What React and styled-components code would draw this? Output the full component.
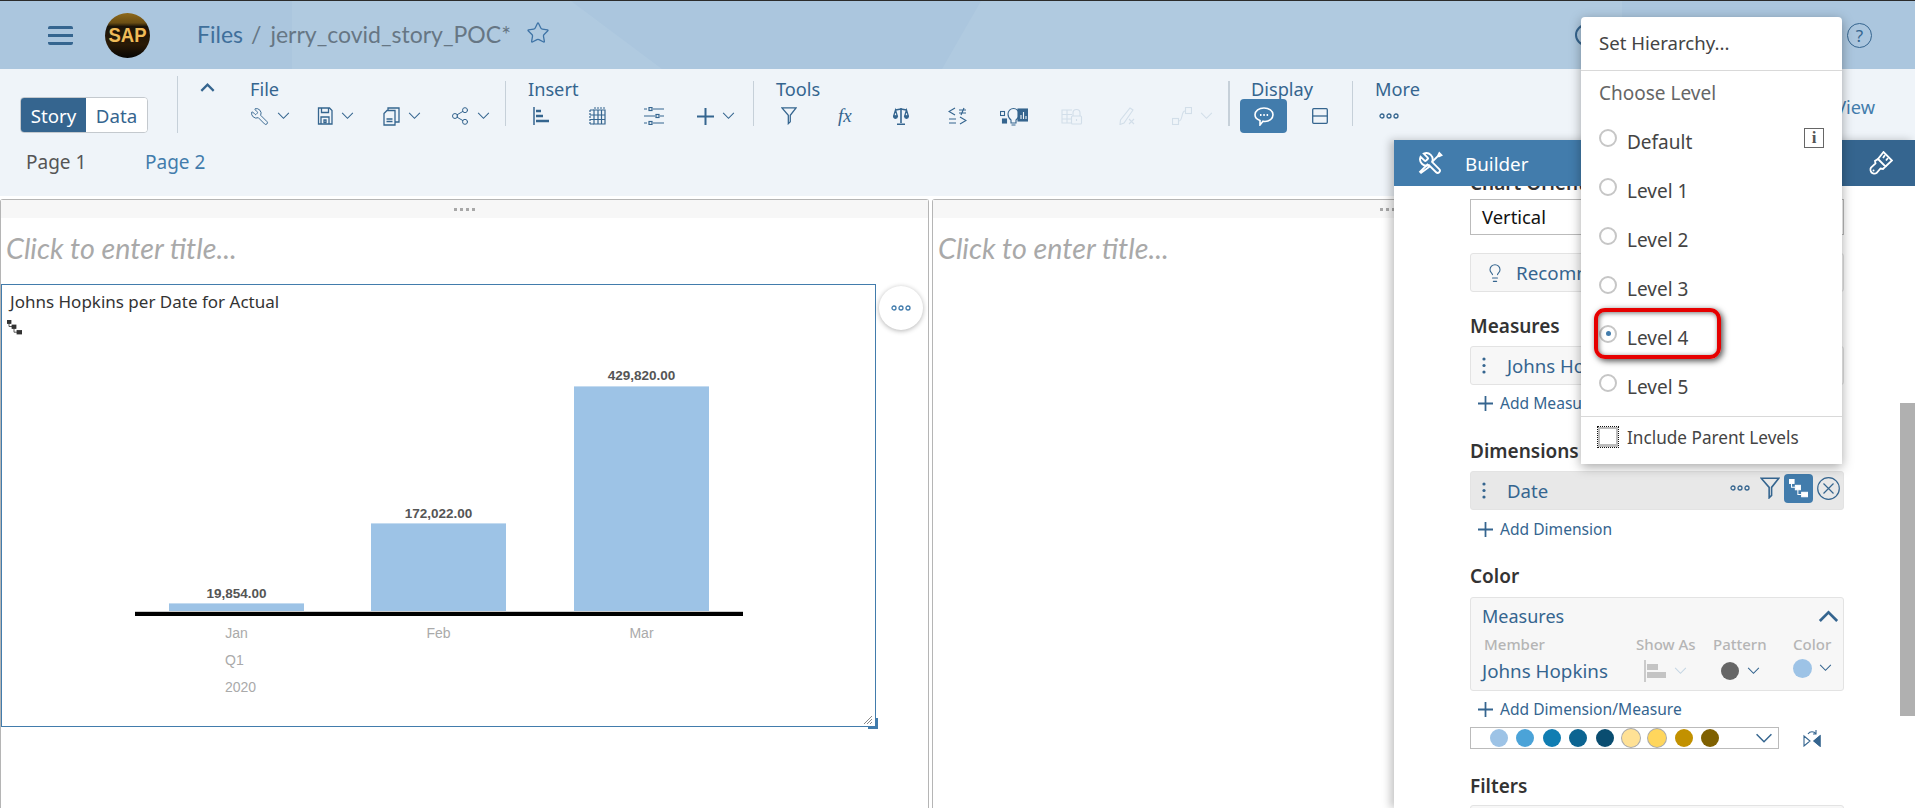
import React from 'react'
import styled, { createGlobalStyle } from 'styled-components'
import { Star, Wrench, Share2, Lightbulb } from 'lucide-react'

const GlobalStyle = createGlobalStyle`
  html, body {
    margin: 0;
    padding: 0;
    background: #fff;
  }
  body {
    font-family: "Noto Sans", "Open Sans", sans-serif;
    color: #333;
    overflow: hidden;
  }
  * {
    box-sizing: border-box;
  }
`

const Page = styled.div`
  position: relative;
  width: 1915px;
  height: 808px;
  overflow: hidden;
  background: #fff;
`

const ShellBar = styled.header`
  position: relative;
  z-index: 0;
  display: flex;
  align-items: center;
  height: 69px;
  padding-left: 48px;
  border-top: 1px solid #2b2b2b;
  background: #abc6de;
  color: #35658f;

  &::before {
    content: '';
    position: absolute;
    top: 0;
    bottom: 0;
    left: 292px;
    width: 370px;
    background: #b0cae0;
    clip-path: polygon(0 0, 279px 0, 100% 100%, 0 100%);
  }

  &::after {
    content: '';
    position: absolute;
    top: 0;
    bottom: 0;
    left: 942px;
    width: 680px;
    background: #b0cae0;
    clip-path: polygon(39px 0, 100% 0, 100% 100%, 0 100%);
  }

  > * {
    position: relative;
    z-index: 1;
  }
`

const Hamburger = styled.div`
  width: 25px;
  height: 19px;
  margin-right: 32px;
  border-top: 3px solid #35658f;
  border-bottom: 3px solid #35658f;
  border-radius: 2px;

  &::after {
    content: '';
    display: block;
    height: 3px;
    margin-top: 5px;
    background: #35658f;
  }
`

const Crumb = styled.span`
  margin-left: ${p => p.$gap || 0}px;
  margin-top: -2px;
  font-family: Lato, sans-serif;
  font-size: 23px;
  color: ${p => p.$muted ? '#667684' : '#3f6f9b'};
`

const StarSlot = styled.span`
  display: block;
  margin-left: 15px;
  color: #3f74a6;
`

const ShellRight = styled.div`
  display: flex;
  align-items: center;
  margin-left: auto;
  padding-right: 43px;
  gap: 250px;
`

const SearchGlyph = styled.span`
  display: block;
  width: 22px;
  height: 22px;
  border: 2px solid #35658f;
  border-radius: 50%;
`

const HelpGlyph = styled.span`
  display: flex;
  align-items: center;
  justify-content: center;
  width: 25px;
  height: 25px;
  border: 1.5px solid #35658f;
  border-radius: 50%;
  font-size: 17px;
  line-height: 1;
  color: #35658f;
`

const Toolbar = styled.section`
  height: 127px;
  background: #eff4f9;
  color: #35658f;
`

const ToolRow = styled.div`
  display: flex;
  align-items: flex-start;
  height: 64px;
  padding-left: 20px;
`

const Segmented = styled.div`
  display: flex;
  flex: none;
  width: 128px;
  height: 36px;
  margin-top: 28px;
  margin-right: 29px;
  border: 1px solid #c4c9ce;
  border-radius: 4px;
  background: #fff;
  overflow: hidden;
`

const Segment = styled.div`
  display: flex;
  align-items: center;
  justify-content: center;
  height: 100%;
  width: ${p => p.$active ? 65 : 61}px;
  font-size: 18.7px;
  background: ${p => p.$active ? '#35658f' : '#fff'};
  color: ${p => p.$active ? '#fff' : '#35658f'};
`

const Divider = styled.div`
  flex: none;
  width: ${p => p.$thick ? 2 : 1}px;
  height: ${p => p.$tall ? 57 : 45}px;
  margin-top: ${p => p.$tall ? 7 : 12}px;
  background: #c6d0d9;
`

const CollapseSlot = styled.div`
  flex: none;
  width: 72px;
  padding: 14px 0 0 22px;
`

const ToolGroup = styled.div`
  flex: none;
  width: ${p => p.$w}px;
  padding-left: ${p => p.$pad}px;
  margin-top: 9px;
`

const GroupLabel = styled.div`
  height: 22px;
  margin-bottom: 4px;
  margin-left: ${p => p.$shift || 0}px;
  font-size: 18.2px;
  line-height: 22px;
  white-space: nowrap;
  color: #35658f;
`

const IconRow = styled.div`
  display: flex;
  align-items: center;
  height: 24px;
`

const ToolItem = styled.div`
  display: flex;
  flex: none;
  align-items: center;
  justify-content: flex-start;
  width: ${p => p.$w}px;
  padding-left: ${p => p.$pad || 0}px;
  gap: ${p => p.$gap || 8}px;
  color: ${p => p.$disabled ? '#d2dee9' : '#35658f'};
`

const ActiveTool = styled.div`
  display: flex;
  flex: none;
  align-items: center;
  justify-content: center;
  width: 47px;
  height: 34px;
  margin-right: 25px;
  border-radius: 4px;
  background: #427cac;
  color: #fff;
`

const FxGlyph = styled.span`
  display: block;
  font-family: "Liberation Serif", serif;
  font-style: italic;
  font-size: 19px;
  line-height: 20px;
`

const ViewLink = styled.div`
  margin-left: auto;
  margin-top: 26px;
  padding-right: 40px;
  font-size: 18.2px;
  color: #427cac;
`

const Tabs = styled.nav`
  display: flex;
  gap: 59px;
  padding: 17px 0 0 26px;
`

const Tab = styled.div`
  width: 60px;
  font-size: 19px;
  line-height: 24px;
  white-space: nowrap;
  color: ${p => p.$active ? '#427cac' : '#555'};
`

const Canvas = styled.main`
  display: grid;
  grid-template-columns: 929px 916px;
  gap: 3px;
  height: 612px;
  padding-top: 3px;
`

const Panel = styled.article`
  border: 1px solid #b5b5b5;
  border-bottom: 0;
  border-radius: 3px 3px 0 0;
`

const PanelHandle = styled.div`
  display: flex;
  align-items: center;
  justify-content: center;
  gap: 3px;
  height: 18px;
  background: #f7f7f7;
`

const HandleDot = styled.span`
  width: 3px;
  height: 3px;
  background: #a8a8a8;
`

const PageTitle = styled.div`
  height: 66px;
  padding: 14px 0 0 5px;
  font-family: Lato, sans-serif;
  font-style: italic;
  font-size: 28.7px;
  line-height: 32px;
  color: #a9a9a9;
`

const ChartBox = styled.div`
  position: relative;
  width: 875px;
  height: 443px;
  border: 1px solid #427cac;
`

const ChartTitle = styled.div`
  height: 20px;
  margin-top: 7px;
  padding-left: 8px;
  font-size: 17px;
  line-height: 20px;
  color: #333;
`

const ChartHint = styled.div`
  height: 22px;
  padding: 8px 0 0 5px;
  color: #333;
`

const ChartCanvas = styled.svg`
  display: block;
`

const MoreBubble = styled.div`
  position: absolute;
  top: 1px;
  left: 877px;
  display: flex;
  align-items: center;
  justify-content: center;
  width: 44px;
  height: 44px;
  border-radius: 50%;
  background: #fff;
  box-shadow: 0 1px 5px rgba(0, 0, 0, 0.3);
  color: #427cac;
`

const ResizeCorner = styled.div`
  position: absolute;
  right: -3px;
  bottom: -3px;
  width: 10px;
  height: 11px;
  border-right: 2px solid #427cac;
  border-bottom: 3px solid #427cac;
`

const ResizeGrip = styled.svg`
  position: absolute;
  right: 3px;
  bottom: 2px;
  stroke: #888;
  stroke-width: 1;
`

const Builder = styled.aside`
  position: absolute;
  top: 140px;
  right: 0;
  width: 521px;
  height: 668px;
  background: #fff;
  box-shadow: -4px 0 8px rgba(0, 0, 0, 0.22);
`

const BuilderHead = styled.div`
  display: flex;
  align-items: center;
  height: 46px;
  padding-left: 24px;
  background: #427cac;
  color: #fff;
`

const BuilderTitle = styled.span`
  margin-left: 22px;
  padding-top: 2px;
  font-size: 18.8px;
`

const BuilderTab = styled.div`
  display: flex;
  align-items: center;
  justify-content: flex-end;
  align-self: stretch;
  width: 75px;
  margin-left: auto;
  padding-right: 22px;
  background: #35658f;
`

const BuilderBody = styled.div`
  height: 622px;
  padding-left: 76px;
  overflow: hidden;
`

const BuilderColumn = styled.div`
  width: 374px;
`

const SectionLabel = styled.div`
  height: 22px;
  margin-top: ${p => p.$top}px;
  margin-bottom: ${p => p.$bottom || 9}px;
  font-size: 19px;
  font-weight: 600;
  line-height: 22px;
  color: #333;
`

const SelectBox = styled.div`
  display: flex;
  align-items: center;
  height: 36px;
  padding: 0 0 2px 11px;
  border: 1px solid #bbb;
  font-size: 18.4px;
  color: #111;
`

const ActionBox = styled.div`
  display: flex;
  align-items: center;
  gap: 11px;
  height: 39px;
  margin-top: 18px;
  padding-left: 14px;
  border: 1px solid #e3e3e3;
  border-radius: 3px;
  background: #f7f7f7;
  font-size: 18.8px;
  color: #35658f;
`

const FieldBox = styled.div`
  position: relative;
  display: flex;
  align-items: center;
  height: 39px;
  padding-left: 11px;
  border: 1px solid #e3e3e3;
  border-radius: 3px;
  background: ${p => p.$hover ? '#e8e8e8' : '#f7f7f7'};
  font-size: 18.6px;
  color: #35658f;
`

const DragDots = styled.svg`
  flex: none;
  margin-right: 21px;
  fill: #35658f;
`

const FieldActions = styled.div`
  display: flex;
  align-items: center;
  margin-left: auto;
  padding: 0 3px 5px 0;
  color: #35658f;
`

const ActionDots = styled.div`
  margin-right: 7px;
  color: #35658f;
`

const HierarchyToggle = styled.div`
  display: flex;
  align-items: center;
  justify-content: center;
  width: 29px;
  height: 29px;
  margin: 0 4px;
  border-radius: 4px;
  background: #427cac;
  color: #fff;
`

const AddLink = styled.div`
  display: flex;
  align-items: center;
  gap: 7px;
  height: 22px;
  margin-top: ${p => p.$top || 7}px;
  padding-left: 8px;
  font-size: 15.6px;
  color: #35658f;
`

const ColorBox = styled.div`
  position: relative;
  height: 94px;
  padding: 7px 11px 0;
  border: 1px solid #e3e3e3;
  border-radius: 3px;
  background: #f7f7f7;
`

const ColorHead = styled.div`
  display: flex;
  align-items: center;
  justify-content: space-between;
  height: 22px;
  margin-right: -7px;
  font-size: 18px;
  color: #35658f;
`

const MemberGrid = styled.div`
  display: grid;
  grid-template-columns: 152px 79px 80px 1fr;
  grid-template-rows: 25px 30px;
  align-items: center;
  margin-top: 4px;
`

const MemberHeading = styled.div`
  font-size: 15px;
  font-weight: 500;
  padding-left: ${p => p.$pad || 0}px;
  white-space: nowrap;
  color: #b5b5b5;
`

const MemberName = styled.div`
  font-size: 18.8px;
  white-space: nowrap;
  color: #35658f;
`

const MemberCell = styled.div`
  display: flex;
  align-items: center;
  gap: ${p => p.$gap || 8}px;
  padding-left: ${p => p.$pad || 0}px;
  margin-top: ${p => p.$lift ? -6 : 0}px;
  color: ${p => p.$faded ? '#c5d6e4' : '#35658f'};
`

const Swatch = styled.span`
  display: block;
  flex: none;
  width: ${p => p.$size || 18}px;
  height: ${p => p.$size || 18}px;
  border-radius: 50%;
  background: ${p => p.$color};
  box-shadow: ${p => p.$ring ? '0 0 0 1px #aaa' : 'none'};
`

const PaletteRow = styled.div`
  display: flex;
  align-items: center;
  margin-top: 7px;
  color: #35658f;
`

const Palette = styled.div`
  display: flex;
  align-items: center;
  gap: 8.4px;
  width: 309px;
  height: 22px;
  padding-left: 19px;
  border: 1px solid #bbb;
  margin-right: 24px;
`

const PaletteArrow = styled.span`
  display: block;
  margin-left: auto;
  padding-right: 5px;
  color: #35658f;
`

const NextBox = styled.div`
  height: 40px;
  border: 1px solid #e3e3e3;
  border-radius: 3px;
  background: #f7f7f7;
`

const ScrollThumb = styled.div`
  position: absolute;
  top: 263px;
  right: 0;
  width: 15px;
  height: 313px;
  background: #b0b0b0;
`

const Menu = styled.div`
  position: absolute;
  top: 17px;
  left: 1581px;
  z-index: 2;
  width: 261px;
  height: 447px;
  border-radius: 4px 4px 0 0;
  background: #fff;
  box-shadow: 0 3px 12px rgba(0, 0, 0, 0.35);
  color: #444;
  font-size: 18.6px;
`

const MenuAction = styled.div`
  height: 54px;
  padding: 14px 0 0 18px;
  border-bottom: 1px solid #d9d9d9;
  line-height: 24px;
`

const MenuHeading = styled.div`
  height: 44px;
  padding: 10px 0 0 18px;
  font-size: 19px;
  line-height: 24px;
  color: #666;
`

const LevelRow = styled.div`
  position: relative;
  display: flex;
  align-items: center;
  height: 49px;
  padding-left: 18px;
  font-size: 19px;
`

const Radio = styled.span`
  display: flex;
  flex: none;
  align-items: center;
  justify-content: center;
  width: 18px;
  height: 18px;
  margin-top: -4px;
  margin-right: 10px;
  border: 2px solid #c6c6c6;
  border-radius: 50%;

  &::after {
    content: '';
    display: ${p => p.$on ? 'block' : 'none'};
    width: 5px;
    height: 5px;
    border-radius: 50%;
    background: #427cac;
  }
`

const LevelText = styled.span`
  margin-top: 4px;
`

const InfoMark = styled.span`
  display: flex;
  align-items: center;
  justify-content: center;
  width: 20px;
  height: 20px;
  margin-left: auto;
  margin-right: 18px;
  margin-top: -4px;
  border: 1px solid #666;
  font-family: "Liberation Serif", serif;
  font-weight: 700;
  font-size: 17px;
  color: #555;
`

const RedCallout = styled.div`
  position: absolute;
  top: -3px;
  left: 13px;
  width: 127px;
  height: 51px;
  border: 4px solid #e60000;
  border-radius: 11px;
  box-shadow: 2px 2px 6px rgba(0, 0, 0, 0.7), inset 1px 1px 5px rgba(0, 0, 0, 0.55);
`

const MenuFooter = styled.div`
  display: flex;
  align-items: center;
  height: 48px;
  margin-top: 7px;
  padding: 0 0 7px 17px;
  border-top: 1px solid #d9d9d9;
  font-size: 17.2px;
`

const CheckMark = styled.span`
  display: block;
  flex: none;
  width: 20px;
  height: 20px;
  margin-right: 9px;
  border: 3px solid #bbb;
  border-right-width: 2px;
  border-left-width: 2px;
  border-top-width: 2px;
  outline: 1px dotted #111;
`

const Glyph = styled.svg`
  display: block;
  flex: none;
  fill: none;
  stroke: currentColor;
  stroke-width: ${p => p.$weight || 1.3};
`

const Chevron = ({ up, size = 13, weight = 1.1 }) => (
  <Glyph width={size} height={size * 0.6} viewBox="0 0 13 8" $weight={weight}>
    <polyline points={up ? '1,7 6.5,1.5 12,7' : '1,1 6.5,6.5 12,1'} />
  </Glyph>
)

const Dots = ({ width = 20 }) => (
  <Glyph width={width} height="6" viewBox="0 0 20 6" $weight={1.3}>
    <circle cx="3" cy="3" r="2" />
    <circle cx="10" cy="3" r="2" />
    <circle cx="17" cy="3" r="2" />
  </Glyph>
)

const SaveIcon = () => (
  <Glyph width="16" height="18" viewBox="0 0 16 18">
    <path d="M1.5 1h11l2.500 2.500V17h-13.500z" />
    <path d="M4.500 1v4.500h7V1M4 17v-7h8v7M7 13h2v2.500H7z" />
  </Glyph>
)

const CopyIcon = () => (
  <Glyph width="17" height="19" viewBox="0 0 17 19">
    <path d="M1 6.500L4 3.500h8V18H1z" />
    <path d="M5 3V1h11v14h-4M3.500 12h6M3.500 14.500h6" />
  </Glyph>
)

const BarsIcon = () => (
  <Glyph width="16" height="18" viewBox="0 0 16 18" $weight={1.5}>
    <path d="M1 0v18" />
    <path d="M3 4h5M3 9h7M3 14h13" strokeWidth="2.400" />
  </Glyph>
)

const TableIcon = () => (
  <Glyph width="17" height="18" viewBox="0 0 17 18" $weight={1.2}>
    <path d="M5 3h11v14H5z" />
    <path d="M1 3h4M1 8h15M1 12.500h15M1 17h4M9 3v14M12.500 3v14" />
    <path d="M1 3v14M5 1h11" strokeDasharray="2 1" />
  </Glyph>
)

const SlidersIcon = () => (
  <Glyph width="20" height="18" viewBox="0 0 20 18" $weight={1.2}>
    <path d="M0 2h3M9 2h11M0 9h11M16 9h4M0 16h3M9 16h11" />
    <rect x="5" y="0.500" width="3" height="3" />
    <rect x="12" y="7.500" width="3" height="3" />
    <rect x="5" y="14.500" width="3" height="3" />
  </Glyph>
)

const PlusIcon = ({ size = 17, weight = 2 }) => (
  <Glyph width={size} height={size} viewBox="0 0 17 17" $weight={weight}>
    <path d="M8.500 0v17M0 8.500h17" />
  </Glyph>
)

const FilterIcon = ({ size = 16 }) => (
  <Glyph width={size} height={size * 1.1} viewBox="0 0 16 18">
    <path d="M0.800 1h14.400L9.300 8.500V15L7.300 17V8.500z" />
  </Glyph>
)

const ScaleIcon = () => (
  <Glyph width="16" height="18" viewBox="0 0 16 18">
    <path d="M8 1v15M4 17.300h8M2.500 3L8 2l5.500 1" strokeWidth="1.600" />
    <path d="M2.500 3L0.700 9h3.600zM13.500 3l-1.800 6h3.600z" />
    <path d="M0.700 9.500a1.800 1.800 0 0 0 3.600 0zM11.700 9.500a1.800 1.800 0 0 0 3.600 0z" fill="currentColor" />
  </Glyph>
)

const CompareIcon = () => (
  <Glyph width="19" height="18" viewBox="0 0 19 18" $weight={1.200}>
    <path d="M7 1L1 4.500L7 8M11 3h7M11 6h7M13 8l3-7M1 12h7M1 16h7M12 10l6 3.500L12 17" />
  </Glyph>
)

const InsightIcon = () => (
  <Glyph width="28" height="20" viewBox="0 0 28 20" $weight={1.100}>
    <rect x="0.500" y="5.500" width="4" height="4" />
    <rect x="2.500" y="13" width="4" height="4" fill="currentColor" />
    <path d="M11 17v-3c-2-1.500-3-3.500-3-6a5.500 5.500 0 0 1 11 0c0 2.500-1 4.500-3 6v3zM11.500 19h4" />
    <rect x="18" y="3" width="10" height="12" fill="currentColor" />
    <path d="M21 13V9M23.500 13V6M26 13v-3" stroke="#eff4f9" />
  </Glyph>
)

const TableLockIcon = () => (
  <Glyph width="22" height="17" viewBox="0 0 22 17" $weight={1.100}>
    <path d="M11 2H1v13h9M1 6.500h10M1 11h9M6 2v13" />
    <path d="M12 8V5a3.500 3.500 0 0 1 7 0v3" />
    <rect x="10.500" y="8" width="10" height="8" rx="1" />
    <path d="M15.500 11v2" />
  </Glyph>
)

const PencilOffIcon = () => (
  <Glyph width="17" height="18" viewBox="0 0 17 18" $weight={1.100}>
    <path d="M11 1l3 2L5 16l-4 1.500L1.500 13zM10 17l5-5M15 17l-5-5" />
  </Glyph>
)

const ConnectIcon = () => (
  <Glyph width="20" height="18" viewBox="0 0 20 18" $weight={1.100}>
    <rect x="0.500" y="11.500" width="6" height="6" />
    <rect x="13.500" y="0.500" width="6" height="6" />
    <path d="M7 14c4 0 2-10 6-10" />
  </Glyph>
)

const BubbleIcon = () => (
  <Glyph width="20" height="19" viewBox="0 0 20 19" $weight={1.600}>
    <path d="M10 1c5 0 9 2.800 9 6.800s-4 6.700-8 6.700c-.800 0-1.500 0-2-.2L6 18v-4.500C3 12.500 1 10.500 1 7.800 1 3.800 5 1 10 1z" />
    <path d="M6 8h1.500M9.300 8h1.500M12.600 8h1.500" strokeWidth="2" />
  </Glyph>
)

const SplitIcon = () => (
  <Glyph width="16" height="16" viewBox="0 0 16 16">
    <rect x="0.700" y="0.700" width="14.600" height="14.600" rx="1" />
    <path d="M0.700 8h14.600" />
  </Glyph>
)

const HierarchyIcon = ({ size = 15 }) => (
  <Glyph width={size} height={size} viewBox="0 0 15 15" $weight={0.800}>
    <rect x="0" y="0" width="4" height="3.500" fill="currentColor" />
    <rect x="5" y="5" width="4" height="3.500" fill="currentColor" />
    <rect x="10" y="10.500" width="5" height="3.500" fill="currentColor" />
    <path d="M2 3v3.500h3M7 8.500v3.700h3" />
  </Glyph>
)

const CircleCross = () => (
  <Glyph width="23" height="23" viewBox="0 0 23 23" $weight={1.200}>
    <circle cx="11.500" cy="11.500" r="10.800" />
    <path d="M6.500 6.500l10 10M16.500 6.500l-10 10" />
  </Glyph>
)

const BuilderIcon = () => (
  <Glyph width="25" height="25" viewBox="0 0 24 24" $weight={1.800}>
    <g transform="translate(24 0) scale(-1 1)">
      <path d="M14.700 6.300a1 1 0 0 0 0 1.400l1.600 1.600a1 1 0 0 0 1.400 0l3.770-3.770a6 6 0 0 1-7.940 7.940l-6.910 6.910a2.120 2.120 0 0 1-3-3l6.910-6.910a6 6 0 0 1 7.940-7.940l-3.760 3.760z" />
    </g>
    <path d="M14 10l5-5 1.500-3 2 2-3 1.500M3 21l-1-1 7-7 2 2z" />
  </Glyph>
)

const PainterIcon = () => (
  <Glyph width="24" height="24" viewBox="0 0 24 24" $weight={1.800}>
    <path d="M9 8l7.500 7.500-2.500 2.500-2.500-.5-4 4.500c-1.500 1-4 .5-5-.5s-1.500-3.500-.5-5l4.500-4-.5-2.500z" />
    <path d="M9 8l5.500-7L23 9.500 16.500 15.500" />
    <path d="M16 4l-2 3M19 7l-2 2.500" />
    <circle cx="4.500" cy="19.500" r="1" fill="currentColor" stroke="none" />
  </Glyph>
)

const ShowAsIcon = () => (
  <Glyph width="22" height="22" viewBox="0 0 22 22" $weight={1.500}>
    <path d="M1 0v22" stroke="#bdbdbd" />
    <rect x="3" y="4" width="11" height="6" fill="#c4c4c4" stroke="none" />
    <rect x="3" y="12" width="19" height="6" fill="#c4c4c4" stroke="none" />
  </Glyph>
)

const SwapIcon = () => (
  <Glyph width="18" height="17" viewBox="0 0 18 17" $weight={1.100}>
    <path d="M1 6v10l6-5zM17 6v10l-6-5z" />
    <path d="M17 6v10l-6-5z" fill="currentColor" />
    <path d="M5 4c2-3 6-3 8 0M13 0v4h-3" />
  </Glyph>
)

const chartBars = [
  { x: 167, y: 269, h: 9, label: '19,854.00', labelY: 264, name: 'Jan' },
  { x: 369, y: 189, h: 89, label: '172,022.00', labelY: 184, name: 'Feb' },
  { x: 572, y: 52, h: 226, label: '429,820.00', labelY: 46, name: 'Mar' }
]

const ChartLabel = styled.text`
  font-family: "Liberation Sans", sans-serif;
  font-size: ${p => p.$strong ? 13.500 : 14}px;
  font-weight: ${p => p.$strong ? 700 : 400};
  fill: ${p => p.$strong ? '#555' : '#aaa'};
`

const BarChart = () => (
  <ChartCanvas width="870" height="390" viewBox="0 0 870 390">
    {chartBars.map(bar => (
      <g key={bar.name}>
        <rect x={bar.x} y={bar.y} width="135" height={bar.h} fill="#9dc3e6" />
        <rect x={bar.x} y={bar.y} width="135" height="1" fill="#c4dbf0" />
        <ChartLabel $strong x={bar.x + 67.500} y={bar.labelY} textAnchor="middle">{bar.label}</ChartLabel>
        <ChartLabel x={bar.x + 67.500} y="304" textAnchor="middle">{bar.name}</ChartLabel>
      </g>
    ))}
    <rect x="133" y="277" width="608" height="1" fill="#ccc" />
    <rect x="133" y="278" width="608" height="4" fill="#000" />
    <ChartLabel x="223" y="331">Q1</ChartLabel>
    <ChartLabel x="223" y="358">2020</ChartLabel>
  </ChartCanvas>
)

const palette = [
  { color: '#9dc3e6' },
  { color: '#4ba3d8' },
  { color: '#107db2' },
  { color: '#0c6491' },
  { color: '#0a4d70' },
  { color: '#ffe195', ring: true },
  { color: '#ffd65c', ring: true },
  { color: '#c29100' },
  { color: '#7f6000' }
]

const levels = ['Level 1', 'Level 2', 'Level 3', 'Level 4', 'Level 5']

const Handle = () => (
  <PanelHandle>
    <HandleDot />
    <HandleDot />
    <HandleDot />
    <HandleDot />
  </PanelHandle>
)

const Drag = () => (
  <DragDots width="4" height="17" viewBox="0 0 4 17">
    <circle cx="2" cy="2" r="1.600" />
    <circle cx="2" cy="8.500" r="1.600" />
    <circle cx="2" cy="15" r="1.600" />
  </DragDots>
)

const LogoMark = () => (
  <svg width="45" height="45" viewBox="0 0 45 45" style={{ marginRight: 47 }}>
    <defs>
      <linearGradient id="logoGlow" x1="0" y1="0" x2="0" y2="1">
        <stop offset="0" stopColor="#8f6a1c" />
        <stop offset="0.22" stopColor="#6a4e14" />
        <stop offset="0.3" stopColor="#1b1408" />
        <stop offset="0.7" stopColor="#2a1a06" />
        <stop offset="1" stopColor="#060504" />
      </linearGradient>
    </defs>
    <circle cx="22.500" cy="22.500" r="22.500" fill="url(#logoGlow)" />
    <text x="22.500" y="29" textAnchor="middle" textLength="38" lengthAdjust="spacingAndGlyphs" fontFamily="Liberation Sans, sans-serif" fontWeight="700" fontSize="20" fill="#f0bb58">SAP</text>
  </svg>
)

const App = () => (
  <Page>
    <GlobalStyle />
    <ShellBar>
      <Hamburger />
      <LogoMark />
      <Crumb>Files</Crumb>
      <Crumb $muted $gap={8}>/</Crumb>
      <Crumb $muted $gap={9}>jerry_covid_story_POC*</Crumb>
      <StarSlot><Star size={24} strokeWidth={1.300} /></StarSlot>
      <ShellRight>
        <SearchGlyph />
        <HelpGlyph>?</HelpGlyph>
      </ShellRight>
    </ShellBar>

    <Toolbar>
      <ToolRow>
        <Segmented>
          <Segment $active>Story</Segment>
          <Segment>Data</Segment>
        </Segmented>
        <Divider $tall />
        <CollapseSlot><Chevron up size={15} weight={2} /></CollapseSlot>
        <ToolGroup $w={255}>
          <GroupLabel>File</GroupLabel>
          <IconRow>
            <ToolItem $w={67}><Wrench size={19} strokeWidth={1.200} style={{ transform: 'scaleX(-1)' }} /><Chevron /></ToolItem>
            <ToolItem $w={66}><SaveIcon /><Chevron /></ToolItem>
            <ToolItem $w={67}><CopyIcon /><Chevron /></ToolItem>
            <ToolItem $w={55} $gap={7}><Share2 size={20} strokeWidth={1.200} /><Chevron /></ToolItem>
          </IconRow>
        </ToolGroup>
        <Divider />
        <ToolGroup $w={247} $pad={27}>
          <GroupLabel $shift={-5}>Insert</GroupLabel>
          <IconRow>
            <ToolItem $w={56}><BarsIcon /></ToolItem>
            <ToolItem $w={55}><TableIcon /></ToolItem>
            <ToolItem $w={53}><SlidersIcon /></ToolItem>
            <ToolItem $w={50}><PlusIcon /><Chevron /></ToolItem>
          </IconRow>
        </ToolGroup>
        <Divider />
        <ToolGroup $w={474} $pad={27}>
          <GroupLabel $shift={-5}>Tools</GroupLabel>
          <IconRow>
            <ToolItem $w={57}><FilterIcon /></ToolItem>
            <ToolItem $w={55}><FxGlyph>fx</FxGlyph></ToolItem>
            <ToolItem $w={55}><ScaleIcon /></ToolItem>
            <ToolItem $w={52}><CompareIcon /></ToolItem>
            <ToolItem $w={61}><InsightIcon /></ToolItem>
            <ToolItem $w={58} $disabled><TableLockIcon /></ToolItem>
            <ToolItem $w={53} $disabled><PencilOffIcon /></ToolItem>
            <ToolItem $w={45} $disabled><ConnectIcon /><Chevron /></ToolItem>
          </IconRow>
        </ToolGroup>
        <Divider $thick />
        <ToolGroup $w={122} $pad={10}>
          <GroupLabel $shift={11}>Display</GroupLabel>
          <IconRow>
            <ActiveTool><BubbleIcon /></ActiveTool>
            <ToolItem $w={16}><SplitIcon /></ToolItem>
          </IconRow>
        </ToolGroup>
        <Divider />
        <ToolGroup $w={100} $pad={22}>
          <GroupLabel>More</GroupLabel>
          <IconRow>
            <ToolItem $w={30} $pad={4}><Dots /></ToolItem>
          </IconRow>
        </ToolGroup>
        <ViewLink>View</ViewLink>
      </ToolRow>
      <Tabs>
        <Tab>Page 1</Tab>
        <Tab $active>Page 2</Tab>
      </Tabs>
    </Toolbar>

    <Canvas>
      <Panel>
        <Handle />
        <PageTitle>Click to enter title...</PageTitle>
        <ChartBox>
          <ChartTitle>Johns Hopkins per Date for Actual</ChartTitle>
          <ChartHint><HierarchyIcon /></ChartHint>
          <BarChart />
          <MoreBubble><Dots /></MoreBubble>
          <ResizeGrip width="9" height="9" viewBox="0 0 9 9">
            <path d="M1 9l8-8M4 9l5-5M7 9l2-2" />
          </ResizeGrip>
          <ResizeCorner />
        </ChartBox>
      </Panel>
      <Panel>
        <Handle />
        <PageTitle>Click to enter title...</PageTitle>
      </Panel>
    </Canvas>

    <Builder>
      <BuilderHead>
        <BuilderIcon />
        <BuilderTitle>Builder</BuilderTitle>
        <BuilderTab><PainterIcon /></BuilderTab>
      </BuilderHead>
      <BuilderBody>
        <BuilderColumn>
          <SectionLabel $top={-14} $bottom={5}>Chart Orientation</SectionLabel>
          <SelectBox>Vertical</SelectBox>
          <ActionBox><Lightbulb size={20} strokeWidth={1.300} />Recommendations</ActionBox>

          <SectionLabel $top={23}>Measures</SectionLabel>
          <FieldBox><Drag />Johns Hopkins</FieldBox>
          <AddLink><PlusIcon size={15} />Add Measure</AddLink>

          <SectionLabel $top={26}>Dimensions</SectionLabel>
          <FieldBox $hover>
            <Drag />Date
            <FieldActions>
              <ActionDots><Dots width={26} /></ActionDots>
              <FilterIcon size={20} />
              <HierarchyToggle><HierarchyIcon size={19} /></HierarchyToggle>
              <CircleCross />
            </FieldActions>
          </FieldBox>
          <AddLink $top={8}><PlusIcon size={15} />Add Dimension</AddLink>

          <SectionLabel $top={25} $bottom={10}>Color</SectionLabel>
          <ColorBox>
            <ColorHead>Measures<Chevron up size={21} weight={1.700} /></ColorHead>
            <MemberGrid>
              <MemberHeading $pad={2}>Member</MemberHeading>
              <MemberHeading $pad={2}>Show As</MemberHeading>
              <MemberHeading>Pattern</MemberHeading>
              <MemberHeading>Color</MemberHeading>
              <MemberName>Johns Hopkins</MemberName>
              <MemberCell $pad={10} $faded><ShowAsIcon /><Chevron /></MemberCell>
              <MemberCell $pad={8} $gap={8}><Swatch $size={18} $color="#666" /><Chevron /></MemberCell>
              <MemberCell $lift $gap={7}><Swatch $size={19} $color="#9dc3e6" /><Chevron /></MemberCell>
            </MemberGrid>
          </ColorBox>
          <AddLink><PlusIcon size={15} />Add Dimension/Measure</AddLink>
          <PaletteRow>
            <Palette>
              {palette.map(item => (
                <Swatch key={item.color} $color={item.color} $ring={item.ring} />
              ))}
              <PaletteArrow><Chevron size={18} /></PaletteArrow>
            </Palette>
            <SwapIcon />
          </PaletteRow>

          <SectionLabel $top={26} $bottom={8}>Filters</SectionLabel>
          <NextBox />
        </BuilderColumn>
      </BuilderBody>
      <ScrollThumb />
    </Builder>

    <Menu>
      <MenuAction>Set Hierarchy...</MenuAction>
      <MenuHeading>Choose Level</MenuHeading>
      <LevelRow>
        <Radio />
        <LevelText>Default</LevelText>
        <InfoMark>i</InfoMark>
      </LevelRow>
      {levels.map(level => (
        <LevelRow key={level}>
          <Radio $on={level === 'Level 4'} />
          <LevelText>{level}</LevelText>
          {level === 'Level 4' && <RedCallout />}
        </LevelRow>
      ))}
      <MenuFooter>
        <CheckMark />
        Include Parent Levels
      </MenuFooter>
    </Menu>
  </Page>
)

export default App
